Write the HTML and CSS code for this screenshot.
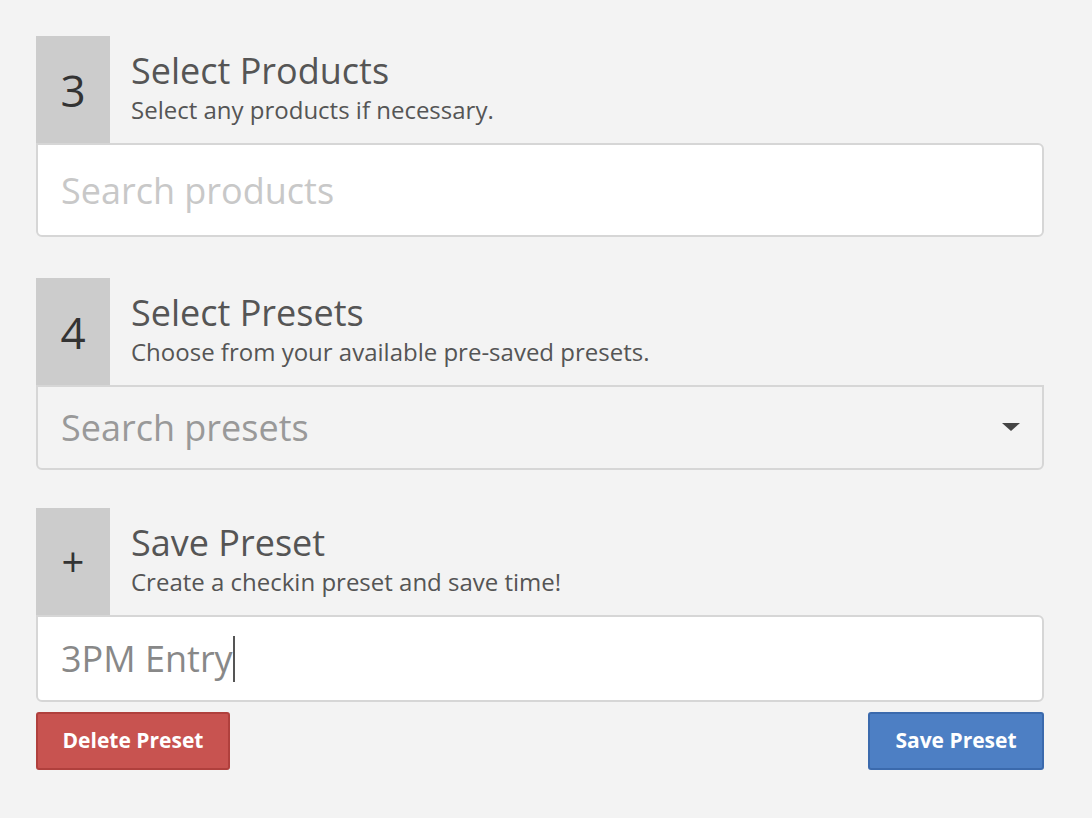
FILE: index.html
```html
<!DOCTYPE html>
<html>
<head>
<meta charset="utf-8">
<link rel="stylesheet" href="styles.css">
</head>
<body>
<div class="page">
  <section class="step">
    <div class="step-head">
      <div class="step-num">3</div>
      <div class="step-text">
        <div class="step-title">Select Products</div>
        <div class="step-sub">Select any products if necessary.</div>
      </div>
    </div>
    <div class="field field-input"><span class="placeholder">Search products</span></div>
  </section>

  <section class="step">
    <div class="step-head">
      <div class="step-num">4</div>
      <div class="step-text">
        <div class="step-title">Select Presets</div>
        <div class="step-sub">Choose from your available pre-saved presets.</div>
      </div>
    </div>
    <div class="field field-select">
      <span class="placeholder dark">Search presets</span>
      <svg class="caret" width="18" height="10" viewBox="0 0 18 10"><path d="M0 0 L18 0 L9 8 Z" fill="#444"/></svg>
    </div>
  </section>

  <section class="step step-last">
    <div class="step-head">
      <div class="step-num plus">+</div>
      <div class="step-text">
        <div class="step-title">Save Preset</div>
        <div class="step-sub">Create a checkin preset and save time!</div>
      </div>
    </div>
    <div class="field field-input field-short"><span class="value">3PM Entry</span><span class="cursor"></span></div>
    <div class="actions">
      <button class="btn btn-danger">Delete Preset</button>
      <button class="btn btn-primary">Save Preset</button>
    </div>
  </section>
</div>
</body>
</html>
```

FILE: styles.css
```css
html, body {
  margin: 0;
  padding: 0;
  background: #f3f3f3;
  font-family: "Open Sans", "Liberation Sans", sans-serif;
}
.page {
  padding: 36px 48px 0 36px;
  display: flex;
  flex-direction: column;
  gap: 41px;
}
.step {
  display: flex;
  flex-direction: column;
}
.step-last {
  margin-top: -3px;
}
.step-head {
  display: flex;
  height: 107px;
}
.step-num {
  width: 74px;
  background: #cccccc;
  color: #333;
  font-size: 44px;
  display: flex;
  align-items: center;
  justify-content: center;
  box-sizing: border-box;
}
.step-num.plus {
  font-size: 40px;
  font-weight: 400;
}
.step-text {
  padding-left: 21px;
  padding-top: 14px;
  color: #555;
}
.step-title {
  font-size: 36px;
  line-height: 42px;
}
.step-sub {
  font-size: 24px;
  line-height: 36px;
  color: #555;
}
.field {
  box-sizing: border-box;
  border: 2px solid #d6d6d6;
  border-radius: 6px;
  display: flex;
  align-items: center;
  padding-left: 23px;
  font-size: 36px;
}
.field-input {
  background: #fff;
  height: 94px;
  border-top-left-radius: 0;
  border-top-right-radius: 6px;
}
.field-short {
  height: 87px;
}
.field-select {
  background: #f3f3f3;
  height: 85px;
  border-top-left-radius: 0;
  border-top-right-radius: 0;
  justify-content: space-between;
  padding-right: 22px;
}
.placeholder {
  color: #c8c8c8;
}
.placeholder.dark {
  color: #999;
}
.value {
  color: #888;
}
.cursor {
  display: inline-block;
  width: 2px;
  height: 46px;
  background: #555;
}
.actions {
  display: flex;
  justify-content: space-between;
  margin-top: 10px;
}
.btn {
  font-family: "Open Sans", "Liberation Sans", sans-serif;
  font-weight: 700;
  font-size: 21px;
  color: #fff;
  height: 58px;
  border-radius: 3px;
  padding: 0 20px 2px;
  cursor: pointer;
}
.btn-danger {
  background: #c85350;
  border: 2px solid #b0403d;
  width: 194px;
}
.btn-primary {
  background: #4d7fc4;
  border: 2px solid #3b6aad;
  width: 176px;
}
```
